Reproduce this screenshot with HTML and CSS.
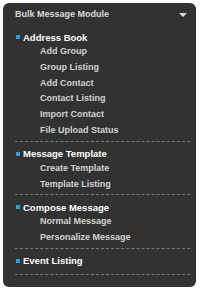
FILE: index.html
```html
<!DOCTYPE html>
<html lang="en">

<head>
    <meta charset="UTF-8">
    <meta name="viewport" content="width=device-width, initial-scale=1.0">
    <title>Bulk Message Module</title>
    <link rel="stylesheet" href="styles.css">
</head>

<body>
    <div class="panel">
        <div class="panel-header">
            <span>Bulk Message Module</span>
            <span class="arrow"></span>
        </div>
        <div class="menu">
            <div class="section">
                <div class="section-title"><span class="bullet"></span>Address Book</div>
                <a href="#" class="item">Add Group</a>
                <a href="#" class="item">Group Listing</a>
                <a href="#" class="item">Add Contact</a>
                <a href="#" class="item">Contact Listing</a>
                <a href="#" class="item">Import Contact</a>
                <a href="#" class="item">File Upload Status</a>
            </div>
            <div class="section">
                <div class="section-title"><span class="bullet"></span>Message Template</div>
                <a href="#" class="item">Create Template</a>
                <a href="#" class="item">Template Listing</a>
            </div>
            <div class="section">
                <div class="section-title"><span class="bullet"></span>Compose Message</div>
                <a href="#" class="item">Normal Message</a>
                <a href="#" class="item">Personalize Message</a>
            </div>
            <div class="section last">
                <div class="section-title"><span class="bullet"></span>Event Listing</div>
            </div>
        </div>
    </div>
</body>

</html>
```

FILE: styles.css
```css
body {
    margin: 0;
    padding: 3px;
    background-color: #fff;
    font-family: "Liberation Sans", Arial, sans-serif;
    font-weight: bold;
    font-size: 9px;
}

.panel {
    width: 193px;
    height: 284px;
    box-sizing: border-box;
    background-color: #323232;
    border-radius: 6px;
}

.panel-header {
    height: 22px;
    padding: 0 9px 0 12px;
    display: flex;
    justify-content: space-between;
    align-items: center;
    color: #dadada;
}

.arrow {
    width: 0;
    height: 0;
    border-left: 4px solid transparent;
    border-right: 4px solid transparent;
    border-top: 4px solid #e0e0e0;
    margin-top: 2px;
}

.menu {
    margin: 0 6px 0 12px;
}

.section {
    padding: 5px 0 2px;
    border-bottom: 1px dashed #7a7a7a;
}

.section.last {
    padding-bottom: 6px;
}

.section-title {
    display: flex;
    align-items: center;
    height: 14px;
    color: #fff;
    font-size: 9.5px;
}

.bullet {
    width: 4px;
    height: 4px;
    margin: 0 3px 0 1px;
    background-color: #2a9fd6;
}

.item {
    display: block;
    height: 15.8px;
    line-height: 15.8px;
    padding-left: 25px;
    color: #d2d2d2;
    text-decoration: none;
}
```
